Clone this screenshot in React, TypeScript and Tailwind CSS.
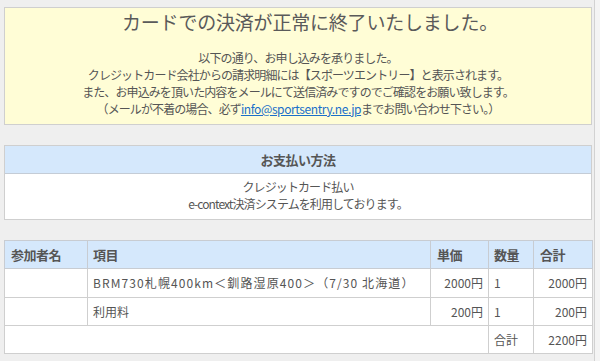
export default function App() {
    const font = { fontFamily: '"Noto Sans CJK JP", "Noto Sans", sans-serif' };

    return (
        <div className="w-[600px] h-[361px] bg-[#f4f4f4] overflow-hidden text-[#555]" style={font}>
            <div className="w-[595px] h-[361px] bg-[#efefef] border-r border-[#d2d2d2] pl-[4px] pr-[2px] pt-[7px]">
                {/* Completion message */}
                <div className="bg-[#fffdd6] border border-[#cfcfcf] text-center pb-[7px]">
                    <h1 className="pl-[24px] text-[19px] leading-[28px] text-[#5a5a5a] tracking-[-0.2px]">
                        カードでの決済が正常に終了いたしました。
                    </h1>
                    <div className="mt-[13px] text-[12px] leading-[17px] tracking-[-0.9px]">
                        <p>以下の通り、お申し込みを承りました。</p>
                        <p>クレジットカード会社からの請求明細には【スポーツエントリー】と表示されます。</p>
                        <p>また、お申込みを頂いた内容をメールにて送信済みですのでご確認をお願い致します。</p>
                        <p>
                            （メールが不着の場合、必ず
                            <a href="#" className="text-[#1a6fc9] underline tracking-[-0.4px]">info@sportsentry.ne.jp</a>
                            までお問い合わせ下さい。）
                        </p>
                    </div>
                </div>

                {/* Payment method */}
                <div className="mt-[20px] border border-[#cfcfcf] bg-white">
                    <div className="h-[28px] bg-[#d5e8fc] border-b border-[#c4ccd6] flex items-center justify-center text-[13px] font-bold text-[#555] tracking-[-0.5px]">
                        お支払い方法
                    </div>
                    <div className="text-center text-[12px] leading-[17px] pt-[4px] pb-[7px] tracking-[-0.9px]">
                        <p>クレジットカード払い</p>
                        <p>e-context決済システムを利用しております。</p>
                    </div>
                </div>

                {/* Items */}
                <table className="mt-[20px] w-[588px] table-fixed border-collapse bg-white text-[12px]">
                    <colgroup>
                        <col className="w-[83px]" />
                        <col className="w-[343px]" />
                        <col className="w-[58px]" />
                        <col className="w-[45px]" />
                        <col className="w-[59px]" />
                    </colgroup>
                    <thead>
                        <tr className="h-[28px] bg-[#d5e8fc] text-[13px] font-bold tracking-[-0.5px]">
                            <th className="border border-[#c8ccd2] text-left pl-[6px] font-bold">参加者名</th>
                            <th className="border border-[#c8ccd2] text-left pl-[5px] font-bold">項目</th>
                            <th className="border border-[#c8ccd2] text-left pl-[6px] font-bold">単価</th>
                            <th className="border border-[#c8ccd2] text-left pl-[5px] font-bold">数量</th>
                            <th className="border border-[#c8ccd2] text-left pl-[6px] font-bold">合計</th>
                        </tr>
                    </thead>
                    <tbody>
                        <tr className="h-[29px]">
                            <td className="border border-[#cfcfcf]"></td>
                            <td className="border border-[#cfcfcf] pl-[5px] whitespace-nowrap tracking-[1.1px]">BRM730札幌400km＜釧路湿原400＞（7/30 北海道）</td>
                            <td className="border border-[#cfcfcf] text-right pr-[5px]">2000円</td>
                            <td className="border border-[#cfcfcf] pl-[5px]">1</td>
                            <td className="border border-[#cfcfcf] text-right pr-[5px]">2000円</td>
                        </tr>
                        <tr className="h-[28px]">
                            <td className="border border-[#cfcfcf]"></td>
                            <td className="border border-[#cfcfcf] pl-[5px]">利用料</td>
                            <td className="border border-[#cfcfcf] text-right pr-[5px]">200円</td>
                            <td className="border border-[#cfcfcf] pl-[5px]">1</td>
                            <td className="border border-[#cfcfcf] text-right pr-[5px]">200円</td>
                        </tr>
                        <tr className="h-[28px]">
                            <td colSpan={3} className="border border-[#cfcfcf]"></td>
                            <td className="border border-[#cfcfcf] pl-[5px]">合計</td>
                            <td className="border border-[#cfcfcf] text-right pr-[5px]">2200円</td>
                        </tr>
                    </tbody>
                </table>
            </div>
        </div>
    );
}
